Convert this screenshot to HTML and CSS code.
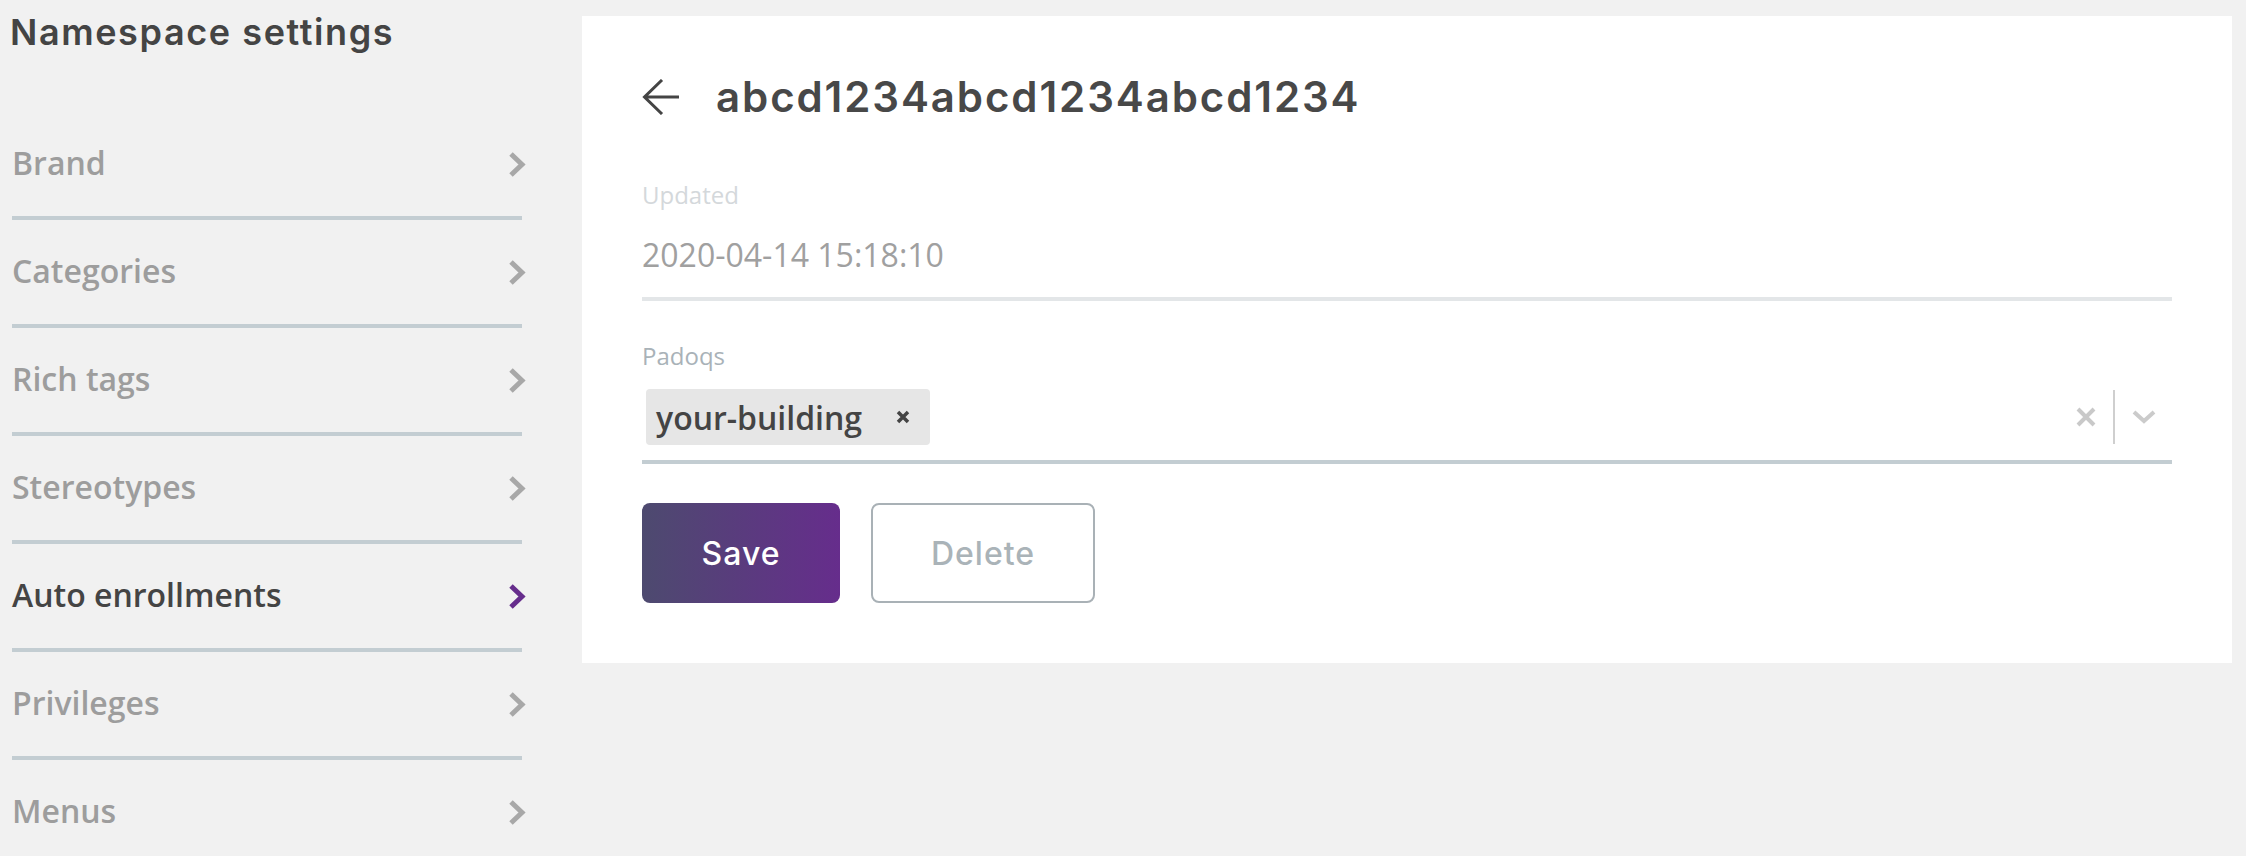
FILE: index.html
```html
<!DOCTYPE html>
<html lang="en">
<head>
  <meta charset="UTF-8">
  <meta name="viewport" content="width=device-width, initial-scale=1.0">
  <title>Namespace settings</title>
  <link rel="stylesheet" href="styles.css">
</head>
<body>
  <div class="page">
    <aside class="sidebar">
      <h1 class="sidebar-title">Namespace settings</h1>
      <nav class="menu">
        <a class="menu-item" href="#"><span>Brand</span>
          <svg class="chev" viewBox="0 0 18 27"><polyline points="3,3 14,13.5 3,24"/></svg></a>
        <a class="menu-item" href="#"><span>Categories</span>
          <svg class="chev" viewBox="0 0 18 27"><polyline points="3,3 14,13.5 3,24"/></svg></a>
        <a class="menu-item" href="#"><span>Rich tags</span>
          <svg class="chev" viewBox="0 0 18 27"><polyline points="3,3 14,13.5 3,24"/></svg></a>
        <a class="menu-item" href="#"><span>Stereotypes</span>
          <svg class="chev" viewBox="0 0 18 27"><polyline points="3,3 14,13.5 3,24"/></svg></a>
        <a class="menu-item active" href="#"><span>Auto enrollments</span>
          <svg class="chev" viewBox="0 0 18 27"><polyline points="3,3 14,13.5 3,24"/></svg></a>
        <a class="menu-item" href="#"><span>Privileges</span>
          <svg class="chev" viewBox="0 0 18 27"><polyline points="3,3 14,13.5 3,24"/></svg></a>
        <a class="menu-item" href="#"><span>Menus</span>
          <svg class="chev" viewBox="0 0 18 27"><polyline points="3,3 14,13.5 3,24"/></svg></a>
      </nav>
    </aside>

    <main class="card">
      <div class="card-head">
        <svg class="back" viewBox="0 0 37 36"><path d="M37 18H3M20 1L2.5 18L20 35"/></svg>
        <h2>abcd1234abcd1234abcd1234</h2>
      </div>

      <div class="field readonly">
        <label>Updated</label>
        <div class="field-value">2020-04-14 15:18:10</div>
      </div>

      <div class="field">
        <label for="padoqs">Padoqs</label>
        <div class="select" id="padoqs">
          <div class="select-values">
            <span class="chip">your-building
              <svg class="chip-x" viewBox="0 0 14 14"><path d="M2 2L12 12M12 2L2 12"/></svg></span>
          </div>
          <div class="select-indicators">
            <svg class="clear" viewBox="0 0 20 20"><path d="M2 2L18 18M18 2L2 18"/></svg>
            <span class="sep"></span>
            <svg class="caret" viewBox="0 0 24 14"><polyline points="2,2 12,11 22,2"/></svg>
          </div>
        </div>
      </div>

      <div class="actions">
        <button class="btn btn-save" type="button">Save</button>
        <button class="btn btn-delete" type="button">Delete</button>
      </div>
    </main>
  </div>
</body>
</html>
```

FILE: styles.css
```css
body {
  margin: 0;
  background-color: #f1f1f1;
  font-family: "Open Sans", sans-serif;
  color: #444;
}
.page {
  display: grid;
  grid-template-columns: 517px 1650px;
  column-gap: 56px;
  padding-left: 9px;
  align-items: start;
}

/* sidebar */
.sidebar-title {
  margin: 11px 0 0 1px;
  font-family: Inter, sans-serif;
  font-weight: 600;
  font-size: 36px;
  line-height: 1.2;
  letter-spacing: 1.6px;
  color: #444;
}
.menu {
  margin-top: 58px;
}
.menu-item {
  display: flex;
  align-items: center;
  justify-content: space-between;
  box-sizing: border-box;
  height: 108px;
  padding-bottom: 4px;
  margin: 0 4px 0 3px;
  border-bottom: 4px solid #c3cdd2;
  font-size: 32px;
  font-weight: 600;
  color: #9d9d9d;
  text-decoration: none;
}
.menu-item .chev {
  width: 18px;
  height: 27px;
  margin: 5px -4px 0 0;
  fill: none;
  stroke: #a8a8a8;
  stroke-width: 5;
}
.menu-item.active {
  color: #444;
}
.menu-item.active .chev {
  stroke: #662d8c;
}

/* card */
.card {
  margin-top: 16px;
  background-color: #fff;
  padding: 56px 60px 60px;
}
.card-head {
  display: flex;
  align-items: center;
}
.card-head .back {
  width: 37px;
  height: 36px;
  margin-right: 37px;
  fill: none;
  stroke: #444;
  stroke-width: 3;
}
.card-head h2 {
  margin: 0;
  font-family: Inter, sans-serif;
  font-weight: 600;
  font-size: 42px;
  line-height: 1.2;
  letter-spacing: 1.9px;
  color: #484848;
}

.field label {
  display: block;
  font-size: 24px;
  color: #a9b2b8;
}
.field.readonly {
  margin-top: 56px;
}
.field.readonly label {
  color: #d4d8db;
  margin-bottom: 22px;
}
.field-value {
  font-size: 32px;
  color: #a0a0a0;
  padding-bottom: 21px;
  border-bottom: 4px solid #e3e6e8;
}
.field + .field {
  margin-top: 38px;
}

.select {
  display: flex;
  align-items: center;
  margin-top: 2px;
  padding: 15px 16px 15px 4px;
  border-bottom: 4px solid #c3cdd2;
}
.select-values {
  flex: 1;
  display: flex;
}
.chip {
  display: flex;
  align-items: center;
  height: 56px;
  padding: 0 20px 0 10px;
  border-radius: 4px;
  background-color: #e6e6e6;
  font-size: 32px;
  font-weight: 600;
  color: #444;
}
.chip-x {
  width: 14px;
  height: 14px;
  margin-left: 34px;
  fill: none;
  stroke: #444;
  stroke-width: 3.5;
}
.select-indicators {
  display: flex;
  align-items: center;
}
.select-indicators .clear {
  width: 20px;
  height: 20px;
  fill: none;
  stroke: #c9c9c9;
  stroke-width: 4;
}
.select-indicators .sep {
  width: 2px;
  height: 54px;
  margin: 0 17px 0 17px;
  background-color: #cfcfcf;
}
.select-indicators .caret {
  width: 24px;
  height: 14px;
  fill: none;
  stroke: #cbcbcb;
  stroke-width: 4;
}

.actions {
  display: flex;
  gap: 31px;
  margin-top: 39px;
}
.btn {
  height: 100px;
  border-radius: 8px;
  font-family: Inter, sans-serif;
  font-weight: 500;
  font-size: 32px;
  letter-spacing: 1px;
}
.btn-save {
  width: 198px;
  border: none;
  color: #fff;
  background: linear-gradient(to right, #4d4a6f, #662d8c);
}
.btn-delete {
  width: 224px;
  border: 2px solid #a9b1b6;
  background-color: #fff;
  color: #aab3b8;
}
```
